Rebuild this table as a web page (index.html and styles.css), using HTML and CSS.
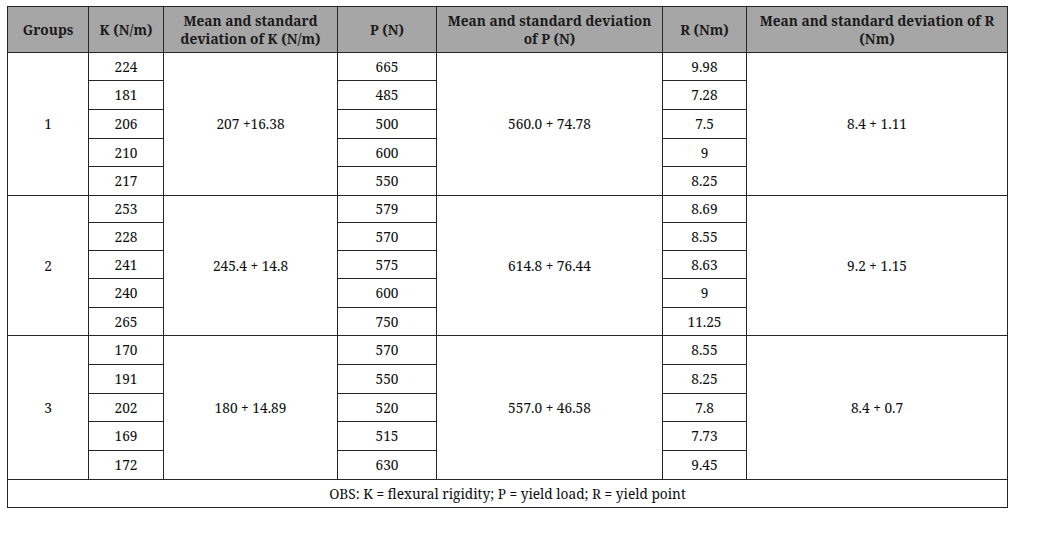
FILE: index.html
```html
<!DOCTYPE html>
<html>
<head>
<meta charset="utf-8">
<link rel="stylesheet" href="styles.css">
</head>
<body>
<div class="page">
<table class="data">
  <colgroup>
    <col class="c-group"><col class="c-k"><col class="c-mk"><col class="c-p"><col class="c-mp"><col class="c-r"><col class="c-mr">
  </colgroup>
  <thead>
    <tr class="head">
      <th>Groups</th>
      <th>K (N/m)</th>
      <th>Mean and standard deviation of K (N/m)</th>
      <th>P (N)</th>
      <th>Mean and standard deviation of P (N)</th>
      <th>R (Nm)</th>
      <th>Mean and standard deviation of R (Nm)</th>
    </tr>
  </thead>
  <tbody>
    <tr class="h28"><td rowspan="5">1</td><td>224</td><td rowspan="5">207 +16.38</td><td>665</td><td rowspan="5">560.0 + 74.78</td><td>9.98</td><td rowspan="5">8.4 + 1.11</td></tr>
    <tr class="h29"><td>181</td><td>485</td><td>7.28</td></tr>
    <tr class="h29"><td>206</td><td>500</td><td>7.5</td></tr>
    <tr class="h28"><td>210</td><td>600</td><td>9</td></tr>
    <tr class="h29"><td>217</td><td>550</td><td>8.25</td></tr>

    <tr class="h27"><td rowspan="5">2</td><td>253</td><td rowspan="5">245.4 + 14.8</td><td>579</td><td rowspan="5">614.8 + 76.44</td><td>8.69</td><td rowspan="5">9.2 + 1.15</td></tr>
    <tr class="h28"><td>228</td><td>570</td><td>8.55</td></tr>
    <tr class="h28"><td>241</td><td>575</td><td>8.63</td></tr>
    <tr class="h29"><td>240</td><td>600</td><td>9</td></tr>
    <tr class="h28"><td>265</td><td>750</td><td>11.25</td></tr>

    <tr class="h29"><td rowspan="5">3</td><td>170</td><td rowspan="5">180 + 14.89</td><td>570</td><td rowspan="5">557.0 + 46.58</td><td>8.55</td><td rowspan="5">8.4 + 0.7</td></tr>
    <tr class="h29"><td>191</td><td>550</td><td>8.25</td></tr>
    <tr class="h28"><td>202</td><td>520</td><td>7.8</td></tr>
    <tr class="h29"><td>169</td><td>515</td><td>7.73</td></tr>
    <tr class="h29"><td>172</td><td>630</td><td>9.45</td></tr>
  </tbody>
  <tfoot>
    <tr class="h28"><td colspan="7">OBS: K = flexural rigidity; P = yield load; R = yield point</td></tr>
  </tfoot>
</table>
</div>
</body>
</html>
```
FILE: styles.css
```css
html, body {
  margin: 0;
  padding: 0;
  background: #ffffff;
}
.page {
  padding: 6px 0 0 7px;
}
.data {
  border-collapse: collapse;
  table-layout: fixed;
  width: 1000px;
  font-family: "Noto Serif", "DejaVu Serif Condensed", "Liberation Serif", serif;
  font-size: 13.7px;
  color: #0d0d0d;
}
.c-group { width: 81px; }
.c-k { width: 75px; }
.c-mk { width: 174px; }
.c-p { width: 99px; }
.c-mp { width: 226px; }
.c-r { width: 84px; }
.c-mr { width: 261px; }

.data th,
.data td {
  border: 1px solid #262626;
  padding: 0 4px;
  text-align: center;
  vertical-align: middle;
  line-height: 18px;
}
.data th {
  background: #a6a6a6;
  font-weight: bold;
  color: #1a1a1a;
}
.head { height: 46px; }
.h27 { height: 27px; }
.h28 { height: 28px; }
.h29 { height: 29px; }
```
